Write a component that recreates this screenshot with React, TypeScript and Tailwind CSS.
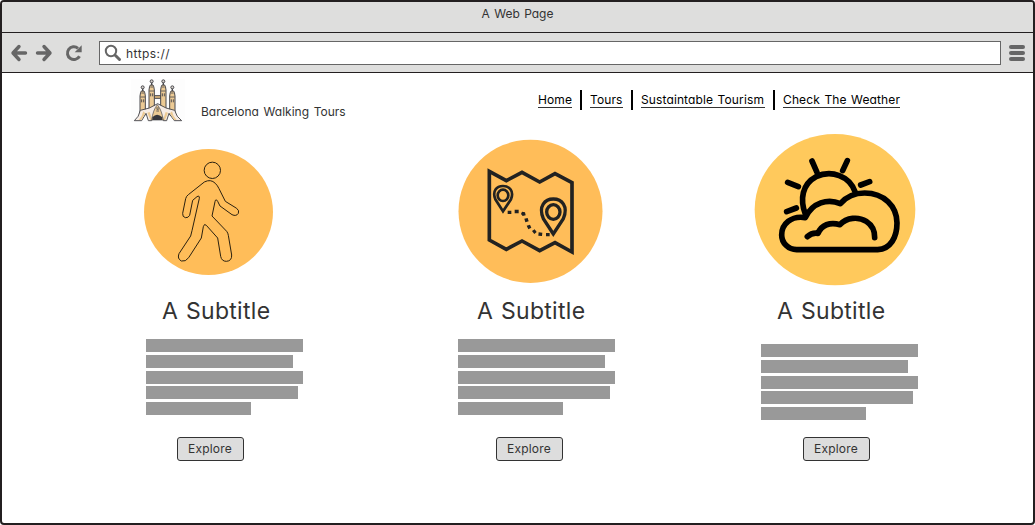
import React from "react";

const fontStyle = "font-['Inter','Liberation_Sans',sans-serif] [font-feature-settings:'cv11'_1,'calt'_0]";

function Arrow({ flip = false }: { flip?: boolean }) {
  return (
    <svg width="18" height="18" viewBox="0 0 18 18" className={flip ? "-scale-x-100" : ""} fill="none" stroke="#666" strokeWidth="3.4" strokeLinecap="round" strokeLinejoin="round">
      <path d="M9 2.5 3 9l6 6.500M3.500 9h12" />
    </svg>
  );
}

function Reload() {
  return (
    <svg width="18" height="18" viewBox="0 0 18 18">
      <path d="M14.500 12.200A6.400 6.400 0 1 1 13 4.300" fill="none" stroke="#666" strokeWidth="3" />
      <path d="M16.700 1.200v7h-7z" fill="#666" />
    </svg>
  );
}

function Cathedral() {
  const towers = [
    { x: 68, top: 52 },
    { x: 95, top: 34 },
    { x: 130, top: 34 },
    { x: 157, top: 52 },
  ];
  return (
    <svg width="54" height="43" viewBox="33 27 162 129" className="bg-[#fdfdfd]">
      <path d="M103 77h20v8h-20z" fill="#dcb77e" stroke="#48484c" strokeWidth="3" />
      {towers.map((t) => (
        <g key={t.x} stroke="#48484c" strokeWidth="3">
          <path d={`M${t.x - 8} 135V${t.top + 26}q1-11 4-15h8q3 4 4 15V135z`} fill="#ecca94" />
          <path d={`M${t.x} ${t.top + 3}v9`} strokeWidth="4" />
          <circle cx={t.x} cy={t.top} r="4.500" fill="#d9d3ce" />
          <path d={`M${t.x - 4} ${t.top + 17}h8M${t.x - 7} ${t.top + 29}h14`} strokeWidth="2.400" />
          <path d={`M${t.x - 3} ${t.top + 36}v9m6-9v9`} strokeWidth="2.800" />
        </g>
      ))}
      <path d="M43 152q14-11 18-31 28-4 52-20 25 16 51 20 5 20 21 31h-22l-16-22-7 22h-10q-3-18-18-26-14 8-17 26H85l-7-22-13 22z" fill="#f6ece5" stroke="#48484c" strokeWidth="2.800" strokeLinejoin="round" />
      <path d="M56 150q11-10 14-26l6 6-12 20zM170 150q-11-10-14-26l-6 6 12 20zM82 128l9 22h6l-8-24zM144 128l-9 22h-6l8-24z" fill="#ecca94" />
      <path d="M112 104q13 16 18 46H95q4-30 17-46z" fill="#ecca94" stroke="#48484c" strokeWidth="2" />
      <path d="M97 150v-8q14-15 30 0v8z" fill="#38383d" />
      <path d="M108 114h9m-7 4h6m-7 5h8" stroke="#48484c" strokeWidth="2.500" />
    </svg>
  );
}

function Walker() {
  return (
    <svg width="129" height="126" viewBox="42 27 387 378">
      <ellipse cx="235.500" cy="216" rx="193.500" ry="189" fill="#ffbd59" />
      <g fill="none" stroke="#2b2110" strokeWidth="3" strokeLinejoin="round">
        <circle cx="247" cy="91" r="24.500" />
        <path d="M223 126 Q242 116 256 130 Q263 137 267 146 L286 184 L320 205 Q329 212 325 220 Q319 230 306 224 L270 198 L263 184 Q257 174 255 185 L246 228 L290 274 Q294 279 295 286 L305 345 Q306 363 289 364 Q275 364 272 349 L263 294 L229 256 Q223 249 220 260 L214 294 L176 353 Q167 366 154 363 Q141 356 147 341 L182 288 Q184 280 186 272 L208 175 Q209 165 201 170 L188 181 L179 226 Q175 234 166 233 Q157 231 158 220 L167 176 Q169 168 175 164 Z" />
      </g>
    </svg>
  );
}

function RouteMap() {
  return (
    <svg width="145" height="144" viewBox="24 27 435 432">
      <ellipse cx="241.500" cy="244" rx="216" ry="215" fill="#ffbd59" />
      <g fill="none" stroke="#222221" strokeWidth="11">
        <path d="M118 124 169 152 216 127 269 156 315 131 366 158V366L315 338 269 362 216 333 169 358 118 330Z" strokeLinejoin="miter" />
        <ellipse cx="159" cy="196" rx="16" ry="17" strokeWidth="8" />
        <path d="M159 244 136 208C126 183 140 168 159 168S193 183 183 208Z" strokeWidth="8" />
        <ellipse cx="310" cy="246" rx="20" ry="22" strokeWidth="10" />
        <path d="M310 312 280 266C264 228 285 207 310 207S356 228 340 266Z" strokeWidth="10" />
      </g>
      <g fill="#222221">
        <path d="M173 242h11v10h-11zM194 239h12v11h-12zM216 245l9 2 2 9-9 2-5-6zM223 266l10-2 3 10-10 3zM230 287l10-3 4 9-9 5zM246 303l8-5 6 8-7 6zM266 307l11 1-1 10-11-1zM288 309h11v10h-11z" />
      </g>
    </svg>
  );
}

function CloudySun() {
  return (
    <svg width="162" height="152" viewBox="27 27 486 456">
      <ellipse cx="270" cy="254" rx="241" ry="227" fill="#ffc95c" />
      <g fill="none" stroke="#000" strokeWidth="17" strokeLinecap="round" strokeLinejoin="round">
        <path d="M155 374H398C437 372 456 336 456 294C456 244 417 204 359 204C328 204 302 217 286 236C249 220 202 232 181 278C139 271 110 297 110 330C110 354 130 374 155 374Z" />
        <path d="M181 267C164 222 172 177 213 155C259 133 314 153 330 200" />
        <path d="M201 108 216 142M307 107 293 137M128 172 160 185M347 180 374 170M125 260 154 249" />
        <path d="M187 335Q201 322 219 325C229 300 255 290 285 299C305 277 340 274 364 289Q390 306 389 338" />
      </g>
    </svg>
  );
}

function Card({ art, artPad, titlePad, barsPad, btnPad, width, late = false }: { art: React.ReactNode; artPad: string; titlePad: string; barsPad: string; btnPad: string; width: string; late?: boolean }) {
  return (
    <section className={`flex shrink-0 flex-col items-start ${width}`}>
      <div className={`h-[165px] ${artPad}`}>{art}</div>
      <h2 className={`h-[40px] whitespace-nowrap text-[23px] leading-[32px] tracking-[0.3px] [word-spacing:1px] text-[#333] ${titlePad}`}>A Subtitle</h2>
      <div className={`flex h-[102px] flex-col gap-[2.800px] ${barsPad} ${late ? "pt-[9px]" : "pt-[4px]"}`}>
        <div className="h-[13px] w-[157px] shrink-0 bg-[#999]" />
        <div className="h-[13px] w-[147px] shrink-0 bg-[#999]" />
        <div className="h-[13px] w-[157px] shrink-0 bg-[#999]" />
        <div className="h-[13px] w-[152px] shrink-0 bg-[#999]" />
        <div className="h-[13px] w-[105px] shrink-0 bg-[#999]" />
      </div>
      <div className={btnPad}>
        <button className="flex h-[24px] w-[67px] items-center justify-center rounded-[3px] border border-[#333] bg-[#ddd] pr-[1px] text-[12px] tracking-[0.2px] text-[#333]">Explore</button>
      </div>
    </section>
  );
}

export default function App() {
  return (
    <div className={`flex h-[525px] w-[1035px] flex-col overflow-hidden rounded-[4px] border-2 border-[#231f20] bg-white text-[12px] text-[#333] ${fontStyle}`}>
      <div className="flex h-[31px] shrink-0 justify-center border-b border-[#231f20] bg-[#dededd] pt-[2px] leading-[20px]">
        <span className="[word-spacing:1px]">A Web Page</span>
      </div>
      <div className="flex h-[40px] shrink-0 items-center border-b border-[#231f20] bg-[#dededd] pl-[8px]">
        <Arrow />
        <div className="ml-[7px] flex"><Arrow flip /></div>
        <div className="ml-[12px]"><Reload /></div>
        <div className="ml-[16px] flex h-[24px] w-[902px] items-center border border-[#666] bg-white pl-[4px]">
          <svg width="18" height="18" viewBox="0 0 18 18" fill="none" stroke="#666" strokeLinecap="round">
            <circle cx="7" cy="7" r="5.200" strokeWidth="2" />
            <path d="m11.500 11.500 4 4" strokeWidth="3" />
          </svg>
          <span className="ml-[4px] pt-[2px] tracking-[0.45px]">https://</span>
        </div>
        <div className="ml-[8px] flex flex-col gap-[2px]">
          <div className="h-[4px] w-[16px] rounded-full bg-[#666]" />
          <div className="h-[4px] w-[16px] rounded-full bg-[#666]" />
          <div className="h-[4px] w-[16px] rounded-full bg-[#666]" />
        </div>
      </div>
      <header className="flex h-[57px] shrink-0 items-start pl-[129px]">
        <div className="pt-[6px]"><Cathedral /></div>
        <span className="ml-[16px] w-[337px] whitespace-nowrap pt-[29px] leading-[20px] [word-spacing:1.3px]">Barcelona Walking Tours</span>
        <nav className="flex items-center whitespace-nowrap pt-[17px] leading-[15px] tracking-[0.12px] [word-spacing:1px] text-black">
          <a className="w-[34px] border-b border-[#333]">Home</a>
          <i className="ml-[8px] h-[20px] w-[2px] bg-black" />
          <a className="ml-[8px] w-[33px] border-b border-[#333]">Tours</a>
          <i className="ml-[8px] h-[20px] w-[2px] bg-black" />
          <a className="ml-[8px] w-[124px] border-b border-[#333]">Sustaintable Tourism</a>
          <i className="ml-[8px] h-[20px] w-[2px] bg-black" />
          <a className="ml-[8px] w-[117px] border-b border-[#333]">Check The Weather</a>
        </nav>
      </header>
      <main className="flex grow items-start pl-[142px]">
        <Card art={<Walker />} width="w-[314px]" artPad="pt-[19px]" titlePad="pl-[18px]" barsPad="pl-[2px]" btnPad="pl-[33px]" />
        <Card art={<RouteMap />} width="w-[296px]" artPad="pt-[9px]" titlePad="pl-[19px]" barsPad="pl-0" btnPad="pl-[38px]" />
        <Card art={<CloudySun />} width="w-[170px]" artPad="pt-[4px]" titlePad="pl-[23px]" barsPad="pl-[7px]" btnPad="pl-[49px]" late />
      </main>
    </div>
  );
}
